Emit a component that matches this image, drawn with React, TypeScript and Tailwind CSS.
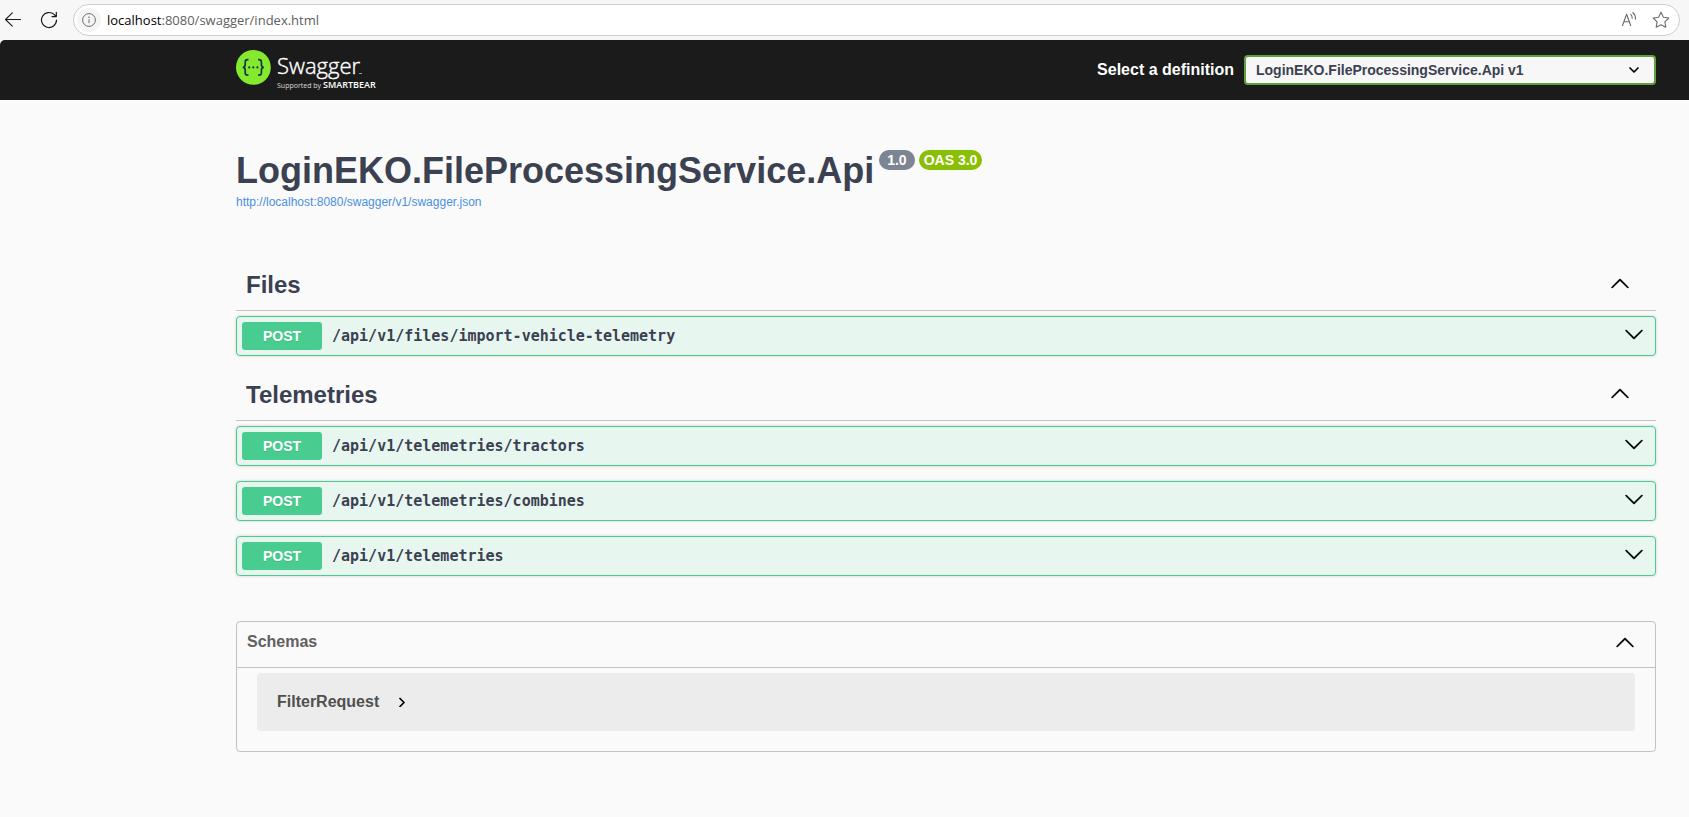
import { useState } from "react";

const sections = [
  { name: "Files", paths: ["/api/v1/files/import-vehicle-telemetry"] },
  {
    name: "Telemetries",
    paths: ["/api/v1/telemetries/tractors", "/api/v1/telemetries/combines", "/api/v1/telemetries"],
  },
];

function ArrowUp() {
  return (
    <svg viewBox="0 0 20 20" className="size-5 shrink-0" aria-hidden="true">
      <path stroke="#000" strokeWidth=".3" d="M17.418 14.908c.272.268.709.268.979 0s.271-.701 0-.969l-7.908-7.83c-.27-.268-.707-.268-.979 0l-7.908 7.83c-.27.268-.27.701 0 .969s.709.268.979 0L10 7.767z" />
    </svg>
  );
}

function ArrowDown() {
  return (
    <svg viewBox="0 0 20 20" className="size-5 shrink-0" aria-hidden="true">
      <path stroke="#000" strokeWidth=".3" d="M17.418 6.109c.272-.268.709-.268.979 0s.271.701 0 .969l-7.908 7.83c-.27.268-.707.268-.979 0l-7.908-7.83c-.27-.268-.27-.701 0-.969s.709-.268.979 0L10 13.25z" />
    </svg>
  );
}

function BrowserBar() {
  return (
    <div className="flex h-10 items-center bg-[#f7f7f7] pr-[9px] pl-1">
      <button type="button" aria-label="Back" className="flex size-[18px] items-center justify-center">
        <svg viewBox="0 0 18 18" className="size-[18px]" fill="none" stroke="#1b1b1b" strokeWidth="1.1" strokeLinecap="round" strokeLinejoin="round">
          <path d="M16.5 8.5H1.5M8.3 1.8 1.5 8.5l6.8 6.7" />
        </svg>
      </button>
      <button type="button" aria-label="Refresh" className="ml-[18px] flex size-[18px] items-center justify-center">
        <svg viewBox="0 0 18 18" className="size-[18px]" fill="none" stroke="#1b1b1b" strokeWidth="1.2" strokeLinecap="round" strokeLinejoin="round">
          <path d="M16.500 9A7.500 7.500 0 1 1 14.300 3.700L16 5.400M16.300 1.300v4.300H12" />
        </svg>
      </button>
      <div className="ml-[15px] flex h-8 flex-1 items-center rounded-full border border-[#cecece] bg-white pr-[9px] pl-[3px]">
        <button type="button" aria-label="Site information" className="flex size-6 items-center justify-center rounded-full bg-[#f5f5f5]">
          <svg viewBox="0 0 14 14" className="size-[14px]" fill="none" stroke="#6b6b6b" strokeWidth="1">
            <circle cx="7" cy="7" r="6.4" />
            <path d="M7 6.2v4" />
            <circle cx="7" cy="4.2" r=".35" fill="#6b6b6b" />
          </svg>
        </button>
        <p className="ml-[6px] flex-1 font-['Open_Sans',sans-serif] text-[13px] leading-5 text-[#606060]">
          <span className="text-black">localhost</span>:8080/swagger/index.html
        </p>
        <button type="button" aria-label="Read aloud" className="flex size-[18px] items-center justify-center">
          <svg viewBox="0 0 18 18" className="size-[18px]" fill="none" stroke="#6b6b6b" strokeWidth="1.1" strokeLinecap="round" strokeLinejoin="round">
            <path d="M2.500 14.500 6.600 3.300l4.100 11.200M3.900 10.700h5.400M10.800 3.300q1.500 1.600 1.400 4M12.800 1.500q3 2.600 2.700 6.600" />
          </svg>
        </button>
        <button type="button" aria-label="Add to favorites" className="ml-[14px] flex size-[18px] items-center justify-center">
          <svg viewBox="0 0 18 18" className="size-[18px]" fill="none" stroke="#6b6b6b" strokeWidth="1.1" strokeLinejoin="round">
            <path d="m9 1.300 2.400 4.900 5.400.8-3.900 3.800.9 5.400L9 13.700l-4.800 2.500.9-5.400L1.200 7l5.400-.8z" />
          </svg>
        </button>
      </div>
    </div>
  );
}

function Logo() {
  return (
    <a href="#" aria-label="Swagger" className="block">
      <svg viewBox="0 0 144 42" className="h-[42px] w-36">
        <circle cx="17.4" cy="18.4" r="17.4" fill="#85ea2d" />
        <g fill="none" stroke="#173647" strokeWidth="1.700">
          <path d="M12.500 10.600h-.8c-1.800 0-2.500.8-2.500 2.400v2.600c0 1.700-.6 2.700-2.400 2.800 1.800.1 2.400 1.100 2.400 2.800v2.600c0 1.600.7 2.400 2.500 2.400h.8" />
          <path d="M22.100 10.600h.8c1.800 0 2.500.8 2.500 2.400v2.600c0 1.700.6 2.700 2.400 2.800-1.800.1-2.400 1.100-2.400 2.800v2.600c0 1.600-.7 2.400-2.500 2.400h-.8" />
        </g>
        <g fill="#173647">
          <circle cx="13.200" cy="18.4" r="1.100" />
          <circle cx="17.300" cy="18.4" r="1.100" />
          <circle cx="21.400" cy="18.4" r="1.100" />
        </g>
        <text x="41" y="25" fill="#fff" stroke="#fff" strokeWidth=".4" className="font-['Open_Sans',sans-serif] text-[22px] font-light">Swagger</text>
        <path d="M123 24.500h3" stroke="#999" strokeWidth="1" />
        <text x="41" y="39" fill="#ddd" className="font-['Open_Sans',sans-serif] text-[7px]">Supported by</text>
        <text x="87" y="39" fill="#fff" className="font-['Open_Sans',sans-serif] text-[9px] font-semibold">SMARTBEAR</text>
      </svg>
    </a>
  );
}

function TopBar() {
  return (
    <header className="flex h-[60px] items-center justify-between rounded-tl-[5px] bg-[#1b1b1b] pr-[33px] pl-59">
      <Logo />
      <div className="flex items-center gap-[10px]">
        <label htmlFor="definition" className="text-base font-bold text-white">Select a definition</label>
        <div className="relative">
          <select id="definition" className="block h-[30px] w-[412px] appearance-none rounded-sm border-2 border-[#62a03f] bg-[#f7f7f7] pr-10 pl-[10px] text-sm leading-5 font-bold text-[#3b4151]">
            <option>LoginEKO.FileProcessingService.Api v1</option>
          </select>
          <svg viewBox="0 0 10 10" className="pointer-events-none absolute top-[10px] right-[17px] size-[10px]" fill="none" stroke="#000" strokeWidth="1.700" strokeLinecap="round" strokeLinejoin="round">
            <path d="m1 3 4 4 4-4" />
          </svg>
        </div>
      </div>
    </header>
  );
}

function Operation({ path }: { path: string }) {
  return (
    <button
      type="button"
      className="flex h-10 w-full items-center rounded border border-[#49cc90] bg-[#e8f6f0] pr-[11px] pb-px pl-[5px] text-left shadow-[0_0_3px_rgba(0,0,0,0.19)]"
    >
      <span className="w-20 rounded-[3px] bg-[#49cc90] text-center text-sm leading-7 font-bold text-white [text-shadow:0_1px_0_rgba(0,0,0,0.1)]">
        POST
      </span>
      <span className="flex-1 px-[10px] pt-px font-['DejaVu_Sans_Mono',monospace] text-[15px] leading-5 font-bold">{path}</span>
      <span className="pb-1"><ArrowDown /></span>
    </button>
  );
}

function Section({ name, paths }: { name: string; paths: string[] }) {
  const [open, setOpen] = useState(true);
  return (
    <section>
      <h2 className="border-b border-[#3b4151]/30 pt-2 pb-[9px] text-2xl leading-8 font-bold">
        <button type="button" onClick={() => setOpen(!open)} className="flex w-full items-center justify-between pr-[26px] pl-[10px]">
          {name}
          <span className="pb-1">{open ? <ArrowUp /> : <ArrowDown />}</span>
        </button>
      </h2>
      {open && (
        <div className="mt-[5px] flex flex-col gap-[15px]">
          {paths.map((p) => <Operation key={p} path={p} />)}
        </div>
      )}
    </section>
  );
}

function Schemas() {
  return (
    <section className="mt-[45px] rounded border border-[#3b4151]/30">
      <h2 className="border-b border-[#3b4151]/30 text-base leading-6 font-bold text-[#606060]">
        <button type="button" className="flex w-full items-center justify-between pt-2 pr-5 pb-[13px] pl-[10px]">
          Schemas
          <ArrowUp />
        </button>
      </h2>
      <div className="mx-5 mt-[5px] mb-5 rounded bg-[#ececec]">
        <button type="button" className="flex h-[58px] w-full items-center gap-[18px] pl-5 text-base leading-6 font-bold text-[#505050]">
          FilterRequest
          <svg viewBox="0 0 10 10" className="size-[10px]" fill="none" stroke="#000" strokeWidth="1.700" strokeLinecap="round" strokeLinejoin="round" aria-hidden="true">
            <path d="m3 1.500 4 4-4 4" />
          </svg>
        </button>
      </div>
    </section>
  );
}

export default function App() {
  return (
    <div className="min-h-screen bg-[#fafafa] font-['Liberation_Sans',Arial,sans-serif] text-[#3b4151]">
      <BrowserBar />
      <div className="bg-[#f7f7f7]"><TopBar /></div>
      <main className="pt-[50px] pr-[33px] pb-16 pl-59">
        <div className="flex items-start">
          <h1 className="text-4xl leading-[42px] font-bold">LoginEKO.FileProcessingService.Api</h1>
          <span className="ml-[5px] rounded-full bg-[#7d8492] px-2 text-sm leading-5 font-bold text-white">1.0</span>
          <span className="ml-1 rounded-full bg-[#89bf04] px-[5px] text-sm leading-5 font-bold text-white">OAS 3.0</span>
        </div>
        <a href="http://localhost:8080/swagger/v1/swagger.json" className="mt-[2px] block w-fit text-xs leading-4 text-[#4990e2]">
          http://localhost:8080/swagger/v1/swagger.json
        </a>
        <div className="mt-[51px] flex flex-col gap-[15px]">
          {sections.map((s) => <Section key={s.name} name={s.name} paths={s.paths} />)}
        </div>
        <Schemas />
      </main>
    </div>
  );
}
